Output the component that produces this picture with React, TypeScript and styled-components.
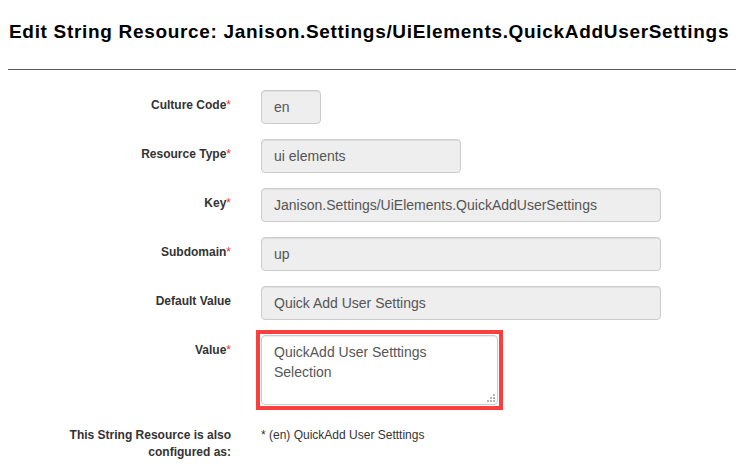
import React from "react";
import styled, { createGlobalStyle } from "styled-components";

const Global = createGlobalStyle`
  html, body { margin: 0; padding: 0; background: #fff; }
  body { font-family: "Liberation Sans", Arial, sans-serif; color: #333; }
  * { box-sizing: border-box; }
`;

const Page = styled.div`
  padding: 22px 4px 0 8px;
`;

const Title = styled.h3`
  margin: 0 0 0 1px;
  font-size: 19px;
  letter-spacing: 0.68px;
  line-height: 20px;
  font-weight: bold;
  color: #000;
  white-space: nowrap;
`;

const Rule = styled.hr`
  margin: 27px 0 20px;
  border: 0;
  border-top: 1px solid #555;
  height: 0;
`;

const Form = styled.div`
  display: grid;
  grid-template-columns: 238px 1fr;
  column-gap: 15px;
  row-gap: 15px;
`;

const Label = styled.label`
  display: block;
  padding: 7px 15px 0 60px;
  font-size: 12px;
  line-height: 17px;
  font-weight: bold;
  color: #333;
  text-align: right;
`;

const Req = styled.span`
  color: #e8342f;
  font-weight: normal;
`;

const Input = styled.input<{ $w: number }>`
  display: block;
  width: ${(p) => p.$w}px;
  height: 34px;
  padding: 6px 12px;
  font-family: "Liberation Sans", Arial, sans-serif;
  font-size: 14px;
  line-height: 20px;
  color: #555;
  background: #eee;
  border: 1px solid #ccc;
  border-radius: 4px;
  box-shadow: inset 0 1px 1px rgba(0, 0, 0, 0.075);
  outline: none;
`;

const Highlight = styled.div`
  position: relative;
  display: inline-block;
  margin: -5px;
  padding: 1px;
  border: 4px solid #fb3f3f;
  vertical-align: top;
`;

const TextArea = styled.textarea`
  display: block;
  width: 237px;
  height: 70px;
  padding: 6px 12px;
  font-family: "Liberation Sans", Arial, sans-serif;
  font-size: 14px;
  line-height: 20px;
  color: #555;
  background: #fff;
  border: 1px solid #ccc;
  border-radius: 4px;
  box-shadow: inset 0 1px 1px rgba(0, 0, 0, 0.075);
  outline: none;
  resize: none;
  overflow: hidden;
`;

const Grip = styled.svg`
  position: absolute;
  right: 4px;
  bottom: 4px;
  width: 9px;
  height: 9px;
`;

const Static = styled.div`
  padding-top: 7px;
  font-size: 12px;
  line-height: 17px;
  color: #333;
`;

const fields: { label: string; req: boolean; value: string; w: number }[] = [
  { label: "Culture Code", req: true, value: "en", w: 60 },
  { label: "Resource Type", req: true, value: "ui elements", w: 200 },
  { label: "Key", req: true, value: "Janison.Settings/UiElements.QuickAddUserSettings", w: 400 },
  { label: "Subdomain", req: true, value: "up", w: 400 },
  { label: "Default Value", req: false, value: "Quick Add User Settings", w: 400 },
];

export default function App() {
  return (
    <Page>
      <Global />
      <Title>Edit String Resource: Janison.Settings/UiElements.QuickAddUserSettings</Title>
      <Rule />
      <Form>
        {fields.map((f) => (
          <React.Fragment key={f.label}>
            <Label>
              {f.label}
              {f.req && <Req>*</Req>}
            </Label>
            <div>
              <Input $w={f.w} readOnly value={f.value} />
            </div>
          </React.Fragment>
        ))}
        <Label>
          Value<Req>*</Req>
        </Label>
        <div>
          <Highlight>
            <TextArea readOnly value={"QuickAdd User Setttings Selection"} />
            <Grip viewBox="0 0 9 9">
              <g fill="#b5b5b5">
                <rect x="7" y="1" width="2" height="2" />
                <rect x="4" y="4" width="2" height="2" />
                <rect x="7" y="4" width="2" height="2" />
                <rect x="1" y="7" width="2" height="2" />
                <rect x="4" y="7" width="2" height="2" />
                <rect x="7" y="7" width="2" height="2" />
              </g>
            </Grip>
          </Highlight>
        </div>
        <Label>This String Resource is also configured as:</Label>
        <Static>* (en) QuickAdd User Setttings</Static>
      </Form>
    </Page>
  );
}
